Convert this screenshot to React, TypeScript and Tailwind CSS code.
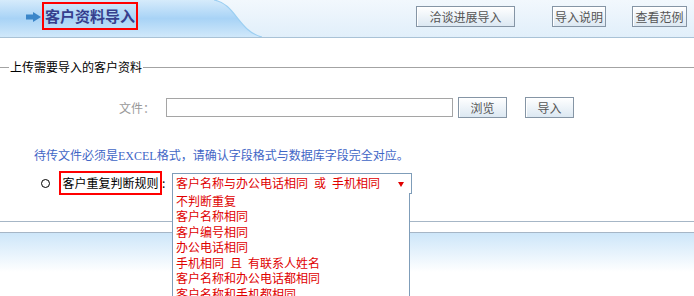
import React from "react";

const FONT = { fontFamily: '"SimSun","Noto Sans CJK SC","Noto Sans",sans-serif' };

function HeaderBg() {
  return (
    <svg className="absolute inset-0 w-full h-full" viewBox="0 0 694 37" preserveAspectRatio="none">
      <defs>
        <linearGradient id="lg" x1="0" y1="0" x2="0" y2="1">
          <stop offset="0" stopColor="#d6ebfb" />
          <stop offset="0.5" stopColor="#a8d3f6" />
          <stop offset="1" stopColor="#d0e8fa" />
        </linearGradient>
        <linearGradient id="rg" x1="0" y1="0" x2="0" y2="1">
          <stop offset="0" stopColor="#f2f8fd" />
          <stop offset="1" stopColor="#e1effa" />
        </linearGradient>
      </defs>
      <rect x="0" y="0" width="694" height="37" fill="url(#rg)" />
      <path d="M0 0 H214 C236 4, 238 31, 262 37 H0 Z" fill="url(#lg)" />
      <path d="M214 0 C236 4, 238 31, 262 37" fill="none" stroke="#9ccff2" strokeWidth="1.2" />
    </svg>
  );
}

function Btn({ children, w }: { children: React.ReactNode; w: string }) {
  return (
    <div
      className={`${w} h-[21px] flex items-center justify-center border border-[#8595a5] bg-gradient-to-b from-white to-[#dce8f2] text-[12px] text-[#555] shadow-[inset_1px_1px_0_#fff]`}
    >
      {children}
    </div>
  );
}

const items = [
  "不判断重复",
  "客户名称相同",
  "客户编号相同",
  "办公电话相同",
  "手机相同\u2002且\u2002有联系人姓名",
  "客户名称和办公电话都相同",
  "客户名称和手机都相同",
];

export default function App() {
  return (
    <div className="w-[694px] h-[296px] overflow-hidden bg-white relative" style={FONT}>
      {/* header */}
      <div className="relative h-[38px] border-b border-[#a9c2d6] flex items-start">
        <HeaderBg />
        <div className="relative flex items-start w-full">
          <svg className="ml-[26px] mt-[12px]" width="15" height="10" viewBox="0 0 15 10">
            <rect x="0" y="2.5" width="8" height="5" fill="#3b86c9" />
            <path d="M7 0 L15 5 L7 10 Z" fill="#3b86c9" />
          </svg>
          <div className="ml-[1px] mt-[2px] w-[96px] h-[28px] border-2 border-[#ff0000] flex items-center justify-center text-[15px] font-bold text-[#363f8e] whitespace-nowrap">
            客户资料导入
          </div>
          <div className="ml-auto mt-[6px] flex items-start mr-[7px]">
            <Btn w="w-[99px]">洽谈进展导入</Btn>
            <div className="ml-[37px]">
              <Btn w="w-[54px]">导入说明</Btn>
            </div>
            <div className="ml-[26px]">
              <Btn w="w-[55px]">查看范例</Btn>
            </div>
          </div>
        </div>
      </div>

      {/* legend line */}
      <div className="mt-[21px] h-[16px] flex items-center">
        <div className="w-[9px] border-t border-[#a3a3a3]" />
        <div className="text-[12px] leading-[16px] text-black px-[1px]">上传需要导入的客户资料</div>
        <div className="flex-1 border-t border-[#a3a3a3]" />
      </div>

      {/* file row */}
      <div className="mt-[22px] h-[21px] flex items-center">
        <div className="pl-[119px] w-[166px] text-[12px] text-[#999]">文件：</div>
        <div className="w-[287px] h-[19px] border border-[#a5a5a5] bg-white" />
        <div className="ml-[5px]">
          <Btn w="w-[49px]">浏览</Btn>
        </div>
        <div className="ml-[18px]">
          <Btn w="w-[49px]">导入</Btn>
        </div>
      </div>

      {/* note */}
      <div className="mt-[29px] h-[16px] pl-[34px] text-[12px] leading-[16px] text-[#3f66c6] whitespace-nowrap">
        待传文件必须是<span style={{ fontFamily: '"Liberation Serif",serif' }}>EXCEL</span>格式，请确认字段格式与数据库字段完全对应。
      </div>

      {/* rule row */}
      <div className="mt-[8px] h-[24px] flex items-center">
        <div className="ml-[41px] w-[9px] h-[9px] rounded-full border border-black" />
        <div className="ml-[9px] w-[103px] h-[24px] border-2 border-[#ff0000] flex items-center justify-center text-[12px] text-black">
          客户重复判断规则
        </div>
        <div className="w-[10px] text-[12px] text-black">:</div>
        <div className="relative z-10 w-[240px] h-[21px] border border-[#7f9db9] bg-white flex items-center pl-[3px] text-[12px] text-[#e00000]">
          <span className="whitespace-pre">{"客户名称与办公电话相同\u2002或\u2002手机相同"}</span>
          <svg className="absolute right-[7px] top-[8px]" width="6" height="5" viewBox="0 0 6 5">
            <path d="M0 0 H6 L3 5 Z" fill="#e00000" />
          </svg>
          <div className="absolute left-[-1px] top-full w-[238px] h-[120px] bg-white border-x border-[#7f9db9] pl-[3px]">
            {items.map((t) => (
              <div key={t} className="h-[15.6px] leading-[15.6px] text-[12px] text-[#e00000] whitespace-pre">
                {t}
              </div>
            ))}
          </div>
        </div>
      </div>

      {/* bottom */}
      <div className="mt-[26px] h-[11px] border-t border-[#a6b6c6]" />
      <div className="h-[40px] border-t border-[#a6b6c6] bg-gradient-to-b from-[#cde6f9] to-white" />
    </div>
  );
}
